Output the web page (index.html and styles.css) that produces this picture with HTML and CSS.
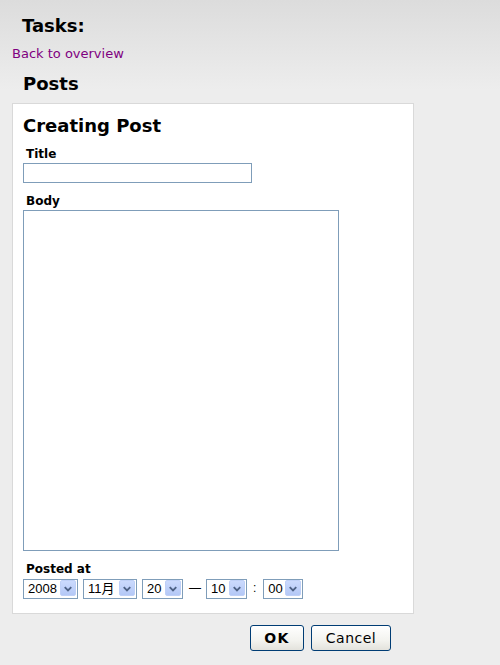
FILE: index.html
```html
<!DOCTYPE html>
<html lang="en">
<head>
    <meta charset="UTF-8">
    <title>Creating Post</title>
    <link rel="stylesheet" href="styles.css">
</head>
<body>
    <div class="page">
        <h1 class="tasks-title">Tasks:</h1>
        <a href="#" class="back-link">Back to overview</a>
        <h2 class="section-title">Posts</h2>

        <form class="post-form">
            <div class="panel">
                <h3 class="panel-title">Creating Post</h3>

                <label class="field-label label-first" for="post_title">Title</label>
                <input type="text" id="post_title" class="text-input">

                <label class="field-label" for="post_body">Body</label>
                <textarea id="post_body" class="text-area"></textarea>

                <label class="field-label" for="post_year">Posted at</label>
                <div class="date-row">
                    <span class="combo combo-year">
                        <select id="post_year"><option>2008</option></select>
                        <span class="combo-btn"><svg width="15" height="15" viewBox="0 0 15 15"><path d="M4 6 L7.5 9.5 L11 6" fill="none" stroke="#4d6185" stroke-width="2"/></svg></span>
                    </span>
                    <span class="combo combo-month">
                        <select><option>11月</option></select>
                        <span class="combo-btn"><svg width="15" height="15" viewBox="0 0 15 15"><path d="M4 6 L7.5 9.5 L11 6" fill="none" stroke="#4d6185" stroke-width="2"/></svg></span>
                    </span>
                    <span class="combo combo-small">
                        <select><option>20</option></select>
                        <span class="combo-btn"><svg width="15" height="15" viewBox="0 0 15 15"><path d="M4 6 L7.5 9.5 L11 6" fill="none" stroke="#4d6185" stroke-width="2"/></svg></span>
                    </span>
                    <span class="sep sep-dash">—</span>
                    <span class="combo combo-small">
                        <select><option>10</option></select>
                        <span class="combo-btn"><svg width="15" height="15" viewBox="0 0 15 15"><path d="M4 6 L7.5 9.5 L11 6" fill="none" stroke="#4d6185" stroke-width="2"/></svg></span>
                    </span>
                    <span class="sep sep-colon">:</span>
                    <span class="combo combo-min">
                        <select><option>00</option></select>
                        <span class="combo-btn"><svg width="15" height="15" viewBox="0 0 15 15"><path d="M4 6 L7.5 9.5 L11 6" fill="none" stroke="#4d6185" stroke-width="2"/></svg></span>
                    </span>
                </div>
            </div>

            <div class="actions">
                <button type="submit" class="btn btn-ok">OK</button>
                <button type="button" class="btn btn-cancel">Cancel</button>
            </div>
        </form>
    </div>
</body>
</html>
```

FILE: styles.css
```css
* {
    box-sizing: border-box;
}

body {
    margin: 0;
    min-height: 665px;
    background-color: #ededed;
    background-image: linear-gradient(to bottom, #dcdcdc 0, #ededed 90px);
    background-repeat: no-repeat;
    font-family: 'DejaVu Sans', Verdana, sans-serif;
    color: #000;
}

.page {
    padding: 15px 0 0 12px;
}

.tasks-title {
    margin: 0;
    padding-left: 10px;
    font-size: 18px;
    line-height: 22px;
    font-weight: bold;
}

.back-link {
    display: block;
    margin-top: 9px;
    font-size: 13px;
    line-height: 16px;
    color: #800080;
    text-decoration: none;
}

.section-title {
    margin: 11px 0 0;
    padding-left: 11px;
    font-size: 18px;
    line-height: 22px;
    font-weight: bold;
}

.post-form {
    margin-top: 8px;
}

.panel {
    width: 402px;
    background: #fff;
    border: 1px solid #d9d9d9;
    padding: 11px 10px 15px;
}

.panel-title {
    margin: 0;
    font-size: 18px;
    line-height: 22px;
    font-weight: bold;
}

.field-label {
    display: block;
    margin-top: 11px;
    padding-left: 3px;
    font-size: 12px;
    line-height: 14px;
    font-weight: bold;
}

.field-label.label-first {
    margin-top: 10px;
}

.text-input {
    display: block;
    width: 229px;
    height: 20px;
    margin: 2px 0 0;
    border: 1px solid #7f9db9;
    padding: 0 3px;
    font-family: 'Liberation Sans', Arial, sans-serif;
    font-size: 12px;
    outline: none;
}

.text-area {
    display: block;
    width: 316px;
    height: 341px;
    margin: 2px 0 0;
    border: 1px solid #7f9db9;
    padding: 2px 3px;
    resize: none;
    font-family: 'Liberation Sans', Arial, sans-serif;
    font-size: 12px;
    outline: none;
}

.date-row {
    display: flex;
    align-items: center;
    margin-top: 2px;
    height: 20px;
}

.combo {
    position: relative;
    display: block;
    height: 20px;
    margin-right: 5px;
}

.combo select {
    -webkit-appearance: none;
    appearance: none;
    width: 100%;
    height: 20px;
    margin: 0;
    border: 1px solid #7f9db9;
    border-radius: 0;
    background: #fff;
    padding: 0 0 0 4px;
    font-family: 'Liberation Sans', 'Noto Sans CJK JP', Arial, sans-serif;
    font-size: 13px;
    color: #000;
    outline: none;
}

.combo-year { width: 55px; }
.combo-month { width: 54px; }
.combo-small { width: 41px; }
.combo-min { width: 40px; }

.combo-btn {
    position: absolute;
    top: 2px;
    right: 2px;
    width: 16px;
    height: 16px;
    border-radius: 2px;
    background: linear-gradient(to bottom, #cbdafd, #b4c8f6);
    border: 1px solid #bfd0f7;
    display: flex;
    align-items: center;
    justify-content: center;
    pointer-events: none;
}

.combo-btn svg {
    display: block;
}

.sep {
    font-family: 'Liberation Sans', Arial, sans-serif;
    font-size: 12px;
    line-height: 20px;
}

.sep-dash {
    margin: 0 5px 0 1px;
}

.sep-colon {
    margin: 0 7px 0 1px;
}

.actions {
    display: flex;
    gap: 7px;
    margin-top: 11px;
    padding-left: 238px;
}

.btn {
    height: 26px;
    border: 1px solid #003c74;
    border-radius: 3px;
    background: linear-gradient(to bottom, #ffffff 0, #f3f3ef 60%, #e3e2dc 100%);
    font-family: 'DejaVu Sans', Verdana, sans-serif;
    font-size: 14px;
    color: #000;
    padding: 0;
    cursor: pointer;
}

.btn-ok {
    width: 54px;
    font-weight: bold;
    letter-spacing: 1.5px;
}

.btn-cancel {
    width: 80px;
    letter-spacing: 0.5px;
}
```
